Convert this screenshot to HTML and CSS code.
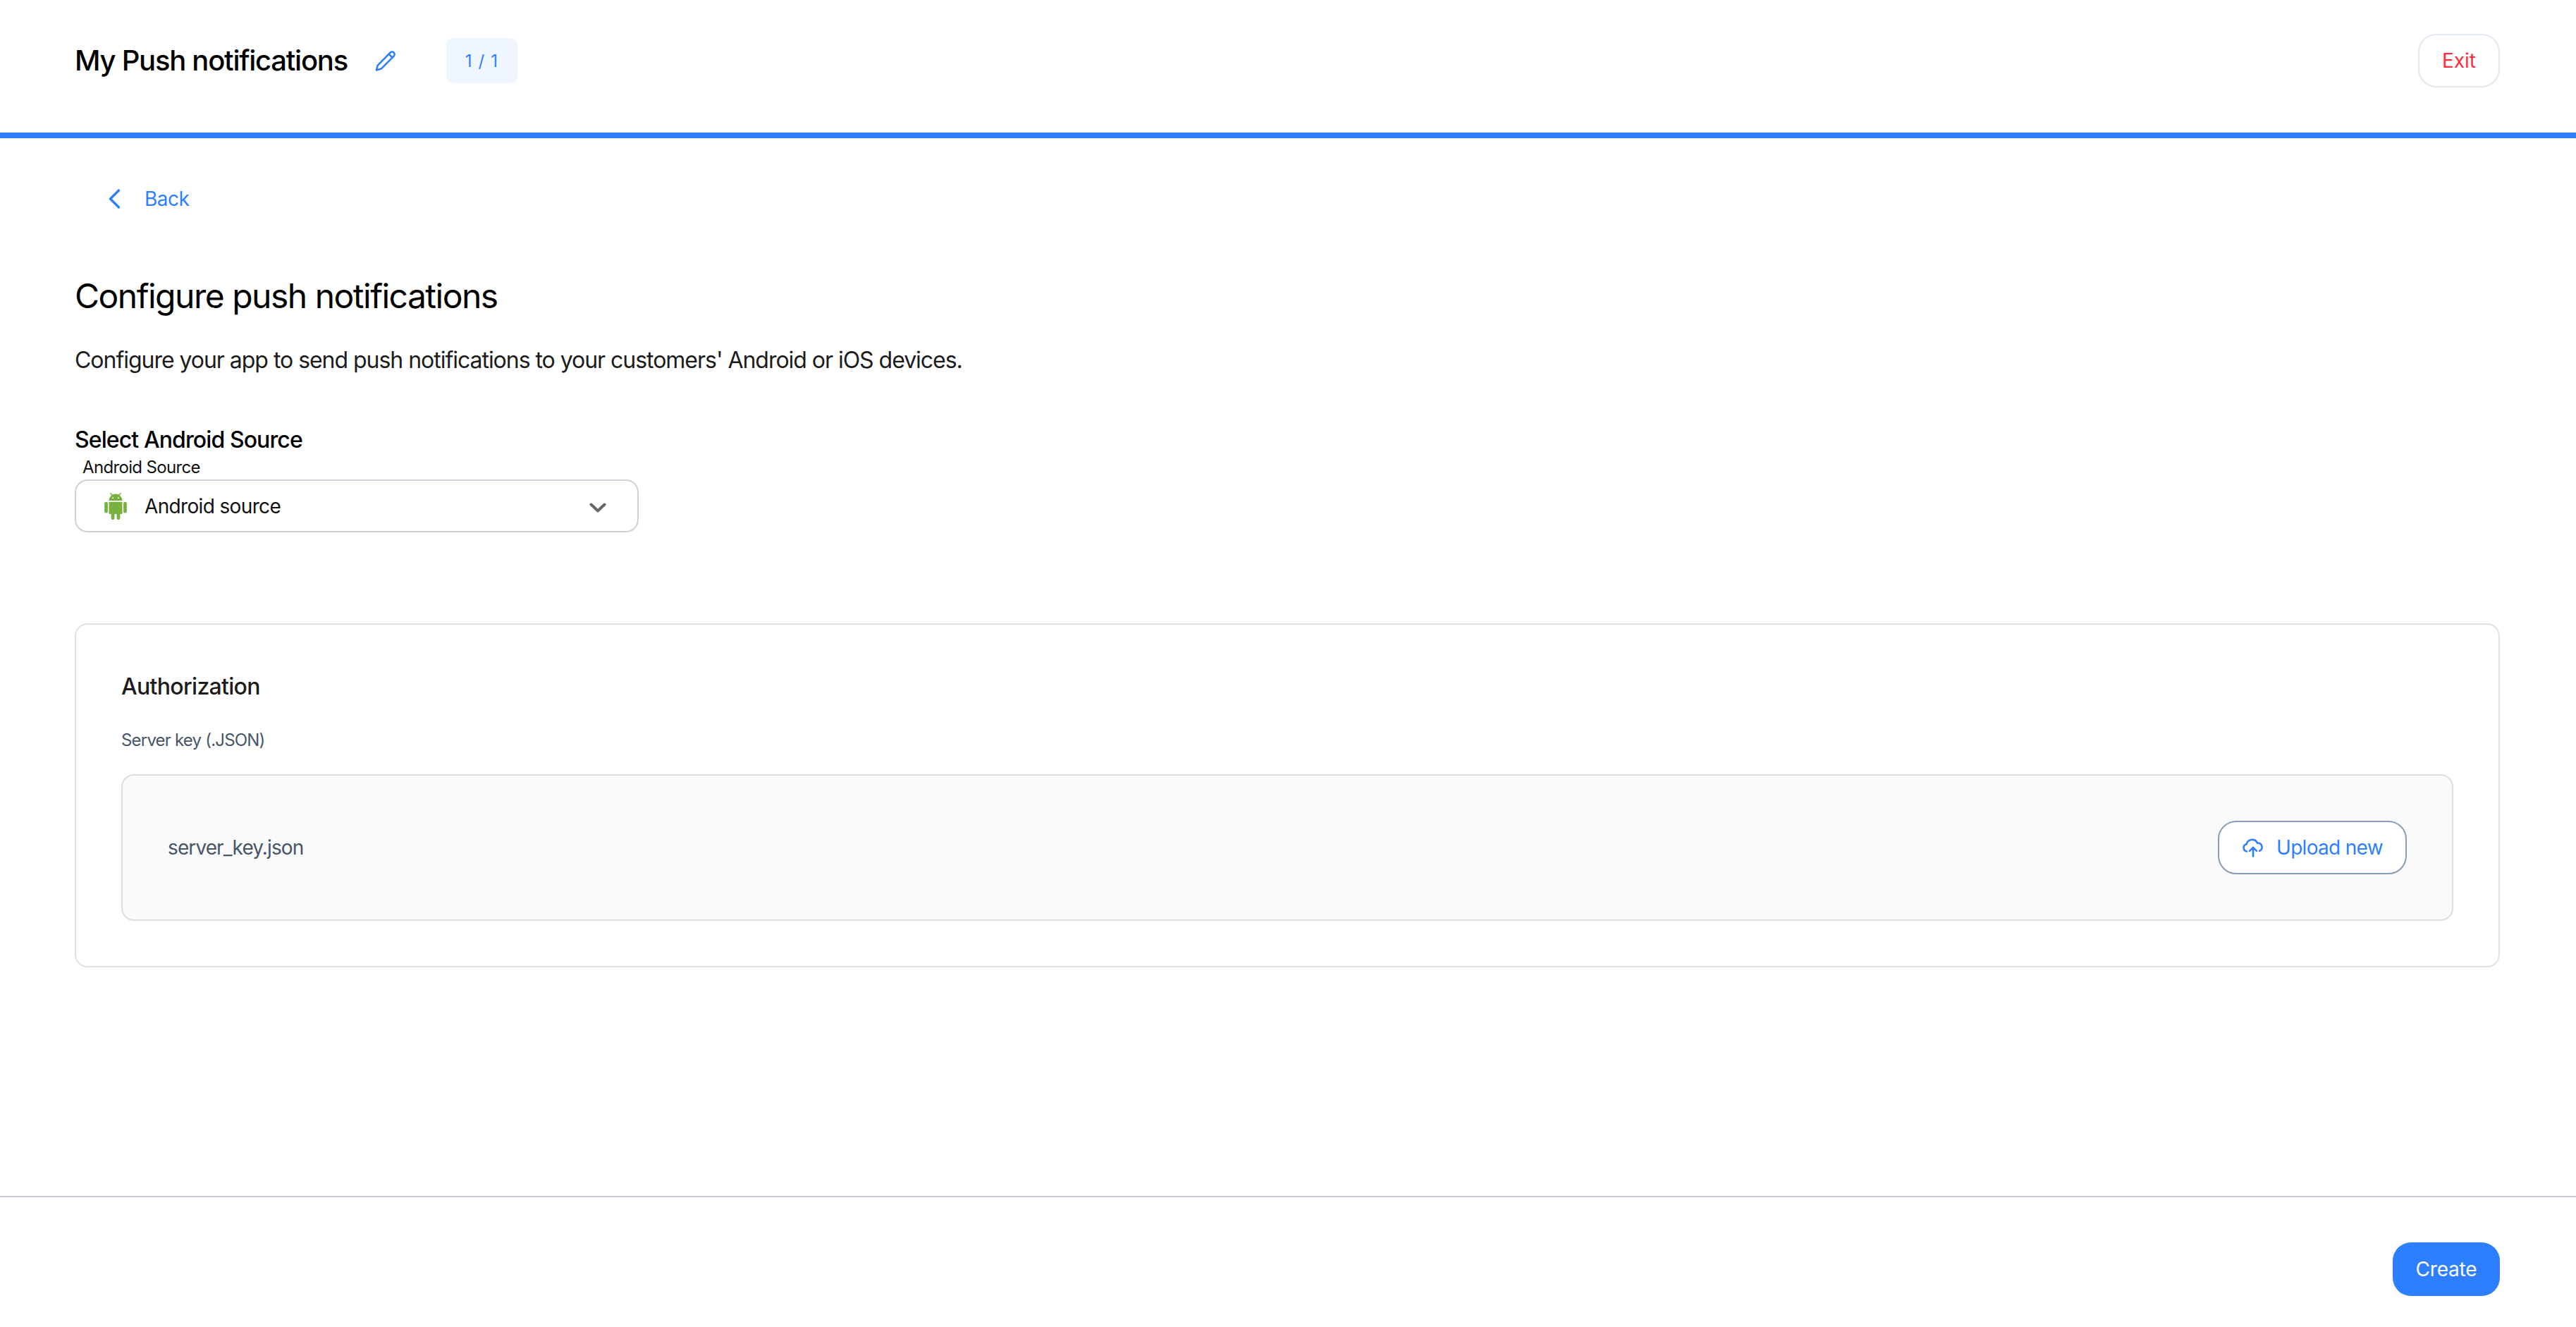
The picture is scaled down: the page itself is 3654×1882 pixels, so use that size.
FILE: index.html
```html
<!DOCTYPE html>
<html lang="en">
<head>
<meta charset="utf-8">
<title>My Push notifications</title>
<link rel="stylesheet" href="styles.css">
</head>
<body>
<div class="page">
  <header class="topbar">
    <div class="topbar-left">
      <h1 class="title">My Push notifications</h1>
      <svg class="pencil" viewBox="0 0 30 30" fill="none" stroke="#2e7fff" stroke-width="2.6" stroke-linejoin="round" stroke-linecap="round"><path d="M2 28.5l1.6-6.6L21.6 3.6a3.6 3.6 0 0 1 5 0 3.6 3.6 0 0 1 0 5L8.6 26.6z"/><path d="M19.6 5.6l5 5"/></svg>
      <span class="step">1 / 1</span>
    </div>
    <button class="btn btn-exit">Exit</button>
  </header>
  <main class="content">
    <a class="back">
      <svg class="back-icon" viewBox="0 0 16 28" fill="none" stroke="#2e7fff" stroke-width="3.4" stroke-linecap="round" stroke-linejoin="round"><path d="M14.5 2L2.5 14l12 12"/></svg>
      <span>Back</span>
    </a>
    <h2 class="heading">Configure push notifications</h2>
    <p class="desc">Configure your app to send push notifications to your customers' Android or iOS devices.</p>
    <h3 class="subheading">Select Android Source</h3>
    <label class="field-label">Android Source</label>
    <div class="select">
      <svg class="android" viewBox="2 0 20 24" fill="#78b13f"><path d="M6 18c0 .55.45 1 1 1h1v3.5c0 .83.67 1.5 1.5 1.5s1.5-.67 1.5-1.5V19h2v3.5c0 .83.67 1.5 1.5 1.5s1.5-.67 1.5-1.5V19h1c.55 0 1-.45 1-1V8H6v10zM3.5 8C2.67 8 2 8.67 2 9.5v7c0 .83.67 1.5 1.5 1.5S5 17.33 5 16.5v-7C5 8.67 4.33 8 3.5 8zm17 0c-.83 0-1.5.67-1.5 1.5v7c0 .83.67 1.5 1.5 1.5s1.5-.67 1.5-1.5v-7c0-.83-.67-1.5-1.5-1.5zm-4.97-5.84l1.3-1.3c.2-.2.2-.51 0-.71-.2-.2-.51-.2-.71 0l-1.48 1.48C13.85 1.23 12.95 1 12 1c-.96 0-1.86.23-2.66.63L7.85.15c-.2-.2-.51-.2-.71 0-.2.2-.2.51 0 .71l1.31 1.31C6.97 3.26 6 5.01 6 7h12c0-1.99-.97-3.75-2.47-4.84zM10 5H9V4h1v1zm5 0h-1V4h1v1z"/></svg>
      <span class="select-value">Android source</span>
      <svg class="chevron" viewBox="0 0 24 14" fill="none" stroke="#666" stroke-width="4" stroke-linecap="round" stroke-linejoin="round"><path d="M2.5 2.5L12 11.5l9.5-9"/></svg>
    </div>
    <section class="card">
      <h3 class="card-title">Authorization</h3>
      <div class="card-label">Server key (.JSON)</div>
      <div class="file-panel">
        <span class="file-name">server_key.json</span>
        <button class="btn btn-upload">
          <svg class="upload-icon" viewBox="0 0 30 28" fill="none" stroke="#2e7fff" stroke-width="2.6" stroke-linecap="round" stroke-linejoin="round"><path d="M6 19.5A5.2 5.2 0 0 1 5.6 9.3 8.2 8.2 0 0 1 21 7.6a5.8 5.8 0 0 1 6.6 5.8 5.6 5.6 0 0 1-3.6 5.4"/><path d="M15 26.5V14.5M10 18.8l5-5 5 5"/></svg>
          <span class="upload-text">Upload new</span>
        </button>
      </div>
    </section>
  </main>
  <footer class="footer">
    <button class="btn btn-create">Create</button>
  </footer>
</div>
</body>
</html>
```

FILE: styles.css
```css
* { box-sizing: border-box; }
html, body { margin: 0; padding: 0; background: #fff; }
body { font-family: Inter, "Liberation Sans", sans-serif; color: #000; }
.page { height: 100vh; display: flex; flex-direction: column; }

.topbar {
  height: 196px;
  flex: none;
  display: flex;
  align-items: center;
  justify-content: space-between;
  padding: 0 108px 16px 106px;
  border-bottom: 8px solid #2e7fff;
}
.topbar-left { display: flex; align-items: center; }
.title { margin: 0; font-size: 40px; line-height: 48px; font-weight: 500; letter-spacing: -1.26px; width: 387px; white-space: nowrap; }
.pencil { width: 30px; height: 30px; margin-left: 39px; flex: none; }
.step {
  width: 101px;
  height: 64px;
  margin-left: 71px;
  display: flex;
  align-items: center;
  justify-content: center;
  border-radius: 10px;
  background: #eff6ff;
  color: #2e7fff;
  font-size: 24px;
  letter-spacing: 1.2px;
}

.btn { font-family: inherit; font-size: 28px; cursor: pointer; height: 76px; border-radius: 26px; background: #fff; }
.btn-exit { width: 116px; border: 2px solid #e2e8f0; color: #ff2d3d; padding: 0; }
.btn-create { width: 152px; border: none; background: #2e7fff; color: #fff; padding: 0; letter-spacing: -0.2px; }

.content { padding: 0 108px 0 106px; }
.back { display: flex; align-items: center; height: 34px; margin-top: 69px; padding-left: 48px; color: #2e7fff; font-size: 28px; letter-spacing: -0.5px; }
.back-icon { width: 16px; height: 28px; margin-right: 35px; flex: none; }
.heading { margin: 93px 0 0; font-size: 48px; line-height: 56px; font-weight: 400; letter-spacing: -1.5px; white-space: nowrap; }
.desc { margin: 43px 0 0; font-size: 32px; line-height: 40px; color: #1c1c1c; letter-spacing: -1.03px; }
.subheading { margin: 73px 0 0; font-size: 32px; line-height: 40px; font-weight: 500; letter-spacing: -0.9px; }
.field-label { display: block; margin: 5px 0 0 11px; font-size: 24px; line-height: 28px; color: #111; letter-spacing: -0.65px; }
.select {
  width: 800px;
  height: 75px;
  margin-top: 3px;
  display: flex;
  align-items: center;
  padding: 0 44px 0 40px;
  border: 2px solid #d0d1d8;
  border-radius: 18px;
}
.android { width: 32px; height: 38px; flex: none; }
.select-value { margin-left: 25px; font-size: 28px; color: #111; flex: 1; letter-spacing: -0.65px; }
.chevron { width: 24px; height: 14px; margin-top: 4px; flex: none; }

.card { margin-top: 129px; height: 488px; padding: 68px 64px 64px; border: 2px solid #e2e2e2; border-radius: 18px; }
.card-title { margin: 0; font-size: 32px; line-height: 40px; font-weight: 500; color: #1c1c1c; letter-spacing: -0.7px; }
.card-label { margin-top: 42px; font-size: 24px; line-height: 28px; color: #475569; letter-spacing: -0.8px; }
.file-panel {
  height: 208px;
  margin-top: 34px;
  display: flex;
  align-items: center;
  justify-content: space-between;
  padding: 0 64px;
  border: 2px solid #dedede;
  border-radius: 18px;
  background: #fafafa;
}
.file-name { font-size: 28px; color: #475569; letter-spacing: -0.9px; }
.btn-upload {
  width: 268px;
  display: flex;
  align-items: center;
  padding: 0 0 0 33px;
  border: 2px solid #8a9db8;
  color: #2e7fff;
}
.upload-icon { width: 30px; height: 28px; margin-right: 18px; flex: none; }
.upload-text { letter-spacing: -0.7px; }

.footer { margin-top: auto; flex: none; display: flex; justify-content: flex-end; padding: 64px 108px 44px 0; border-top: 2px solid #c6cad6; }
```
